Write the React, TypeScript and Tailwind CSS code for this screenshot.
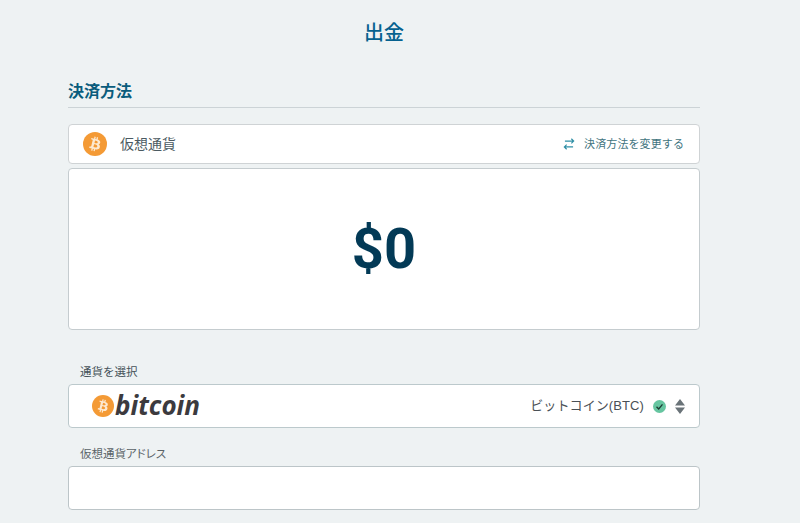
import React from "react";

const cjk = "font-['Liberation_Sans','Noto_Sans_CJK_JP',sans-serif]";

function Coin({ size }: { size: number }) {
  return (
    <svg width={size} height={size} viewBox="0 0 32 32" className="shrink-0">
      <circle cx="16" cy="16" r="16" fill="#f49a35" />
      <path
        fill="#fde9d0"
        d="M23 14c.3-2.100-1.300-3.200-3.500-4l.7-2.800-1.700-.4-.7 2.700-1.400-.3.700-2.700-1.700-.4-.7 2.800-1.100-.3-2.400-.6-.4 1.800 1.300.3c.7.200.8.600.8 1l-1.900 7.700c-.1.200-.3.500-.8.400l-1.300-.3-.8 2 2.200.6 1.200.3-.7 2.800 1.700.4.700-2.800 1.400.4-.7 2.800 1.700.4.700-2.800c2.900.6 5.100.3 6-2.300.7-2.100 0-3.300-1.500-4.100 1.100-.3 1.900-1 2.200-2.600zm-3.900 5.400c-.5 2.100-4 1-5.200.7l.9-3.700c1.100.3 4.800.8 4.300 3zm.5-5.500c-.5 1.900-3.400.9-4.300.7l.8-3.300c1 .2 4 .7 3.500 2.600z"
      />
    </svg>
  );
}

export default function App() {
  return (
    <div className={`h-[523px] overflow-hidden bg-[#eef2f3] pl-[68px] ${cjk}`}>
      <div className="w-[632px]">
        <h1 className="pt-[20px] text-center text-[20px] leading-[26px] font-medium text-[#05618f]">出金</h1>

        <h2 className="mt-[34px] border-b border-[#ccd3d6] pb-[3px] text-[16px] leading-[24px] font-bold text-[#0a5c7c]">決済方法</h2>

        <div className="mt-4 flex h-10 items-center rounded border border-[#cfd3d5] bg-white pr-[15px] pl-[14px]">
          <Coin size={24} />
          <span className="ml-[13px] text-[14px] text-[#4b5a62]">仮想通貨</span>
          <svg width="14" height="14" viewBox="0 0 24 24" fill="none" stroke="#2f8fa6" strokeWidth="2" className="mr-[8px] ml-auto">
            <path d="M20 7H5M16 3l4 4-4 4M4 17h15M8 13l-4 4 4 4" />
          </svg>
          <span className="text-[11px] tracking-[0.1px] text-[#3f7480]">決済方法を変更する</span>
        </div>

        <div className="mt-1 flex h-[162px] items-center justify-center rounded border border-[#c5cccf] bg-white">
          <span className="font-['Roboto',sans-serif] text-[56px] font-bold text-[#033a56]">$0</span>
        </div>

        <div className="mt-[34px] pl-3 text-[11.5px] leading-4 text-[#46525a]">通貨を選択</div>
        <div className="mt-[4px] flex h-11 items-center rounded border border-[#bcc9cc] bg-white pr-[14px] pl-[23px]">
          <Coin size={22} />
          <span className="ml-px -translate-y-px font-['Open_Sans',sans-serif] text-[26px] leading-none font-bold text-[#3c3a3e] italic">bitcoin</span>
          <span className="ml-auto text-[13px] tracking-[0.1px] text-[#4a5056]">ビットコイン(BTC)</span>
          <svg width="13" height="13" viewBox="0 0 24 24" className="ml-[9px]">
            <circle cx="12" cy="12" r="12" fill="#66c5a0" />
            <path d="M6.500 12.500l4 4 7-8.500" fill="none" stroke="#1c3b33" strokeWidth="2.500" />
          </svg>
          <svg width="10" height="15" viewBox="0 0 10 15" className="ml-[9px]">
            <path d="M5 0l5 6.500H0zM5 15l5-6.500H0z" fill="#6a7378" />
          </svg>
        </div>

        <div className="mt-[18px] pl-3 text-[11.5px] leading-4 text-[#5a6368] [font-feature-settings:'palt']">仮想通貨アドレス</div>
        <div className="mt-[4px] h-11 rounded border border-[#bcc5c8] bg-white" />
      </div>
    </div>
  );
}
